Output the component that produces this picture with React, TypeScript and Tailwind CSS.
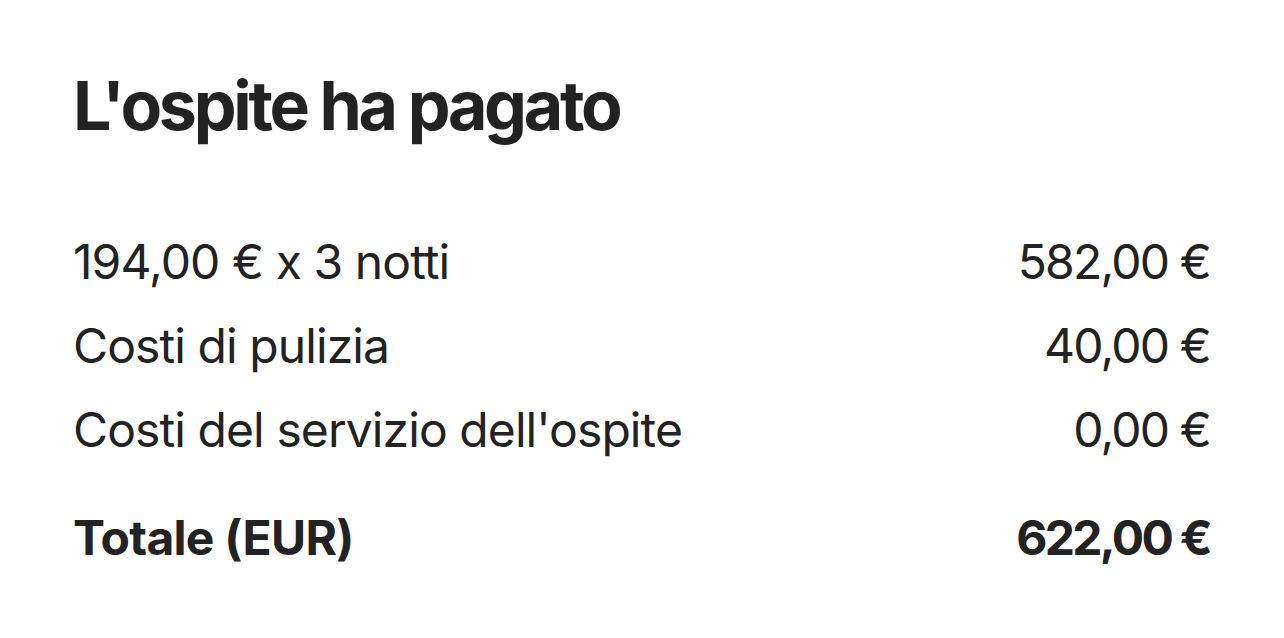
import React from 'react';

const LINES = [
  { label: '194,00 € x 3 notti', amount: '582,00 €' },
  { label: 'Costi di pulizia', amount: '40,00 €' },
  { label: "Costi del servizio dell'ospite", amount: '0,00 €' },
];

export default function App() {
  return (
    <div className="min-h-screen bg-white pl-[73px] pr-[74px] pt-[64px] font-['Inter',sans-serif] text-[#222222]">
      <h1 className="text-[68px] font-bold leading-[83px] tracking-[-0.048em]">L'ospite ha pagato</h1>

      <div className="mt-[73px]">
        {LINES.map((line) => (
          <div key={line.label} className="flex items-center justify-between text-[48px] leading-[84px]">
            <span className="tracking-[-0.019em]">{line.label}</span>
            <span className="tracking-[-0.038em]">{line.amount}</span>
          </div>
        ))}
      </div>

      <div className="mt-[24px] flex items-center justify-between text-[48px] font-bold leading-[84px]">
        <span className="tracking-[-0.015em]">Totale (EUR)</span>
        <span className="tracking-[-0.056em]">622,00 €</span>
      </div>
    </div>
  );
}
